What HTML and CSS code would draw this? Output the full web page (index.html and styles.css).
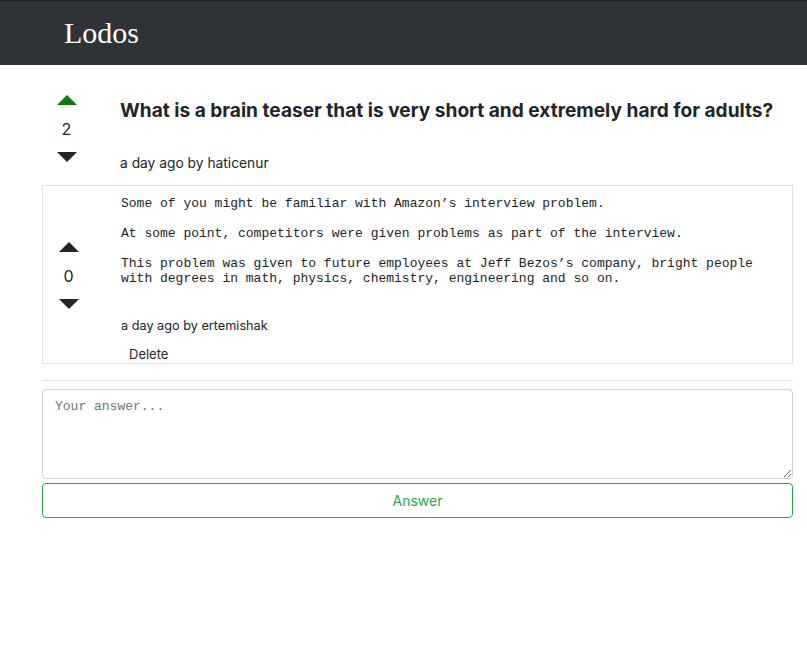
FILE: index.html
```html
<!DOCTYPE html>
<html>
<head>
<meta charset="utf-8">
<link rel="stylesheet" href="styles.css">
</head>
<body>
<header class="navbar"><span class="brand">Lodos</span></header>
<main class="container">
  <section class="question">
    <div class="vote">
      <span class="arrow up green"></span>
      <span class="count">2</span>
      <span class="arrow down"></span>
    </div>
    <div class="body">
      <h1 class="title">What is a brain teaser that is very short and extremely hard for adults?</h1>
      <div class="meta">a day ago by haticenur</div>
    </div>
  </section>
  <section class="answer">
    <div class="vote">
      <span class="arrow up"></span>
      <span class="count">0</span>
      <span class="arrow down"></span>
    </div>
    <div class="body">
      <div class="text">
        <p>Some of you might be familiar with Amazon’s interview problem.</p>
        <p>At some point, competitors were given problems as part of the interview.</p>
        <p>This problem was given to future employees at Jeff Bezos’s company, bright people<br>with degrees in math, physics, chemistry, engineering and so on.</p>
      </div>
      <div class="meta">a day ago by ertemishak</div>
      <button class="delete">Delete</button>
    </div>
  </section>
  <hr class="divider">
  <form class="answer-form">
    <textarea class="input" placeholder="Your answer..."></textarea>
    <button type="button" class="submit">Answer</button>
  </form>
</main>
</body>
</html>
```
FILE: styles.css
```css
* { box-sizing: border-box; }
body {
  margin: 0;
  font-family: Inter, "Noto Sans", sans-serif;
  color: #212529;
  background: #fff;
}
.navbar {
  height: 65px;
  background: #2f3337;
  border-top: 1px solid #1c1f22;
  display: flex;
  align-items: center;
  padding-left: 64px;
}
.brand {
  font-family: "Liberation Serif", serif;
  font-size: 30px;
  color: #fff;
}
.container {
  padding: 0 14px 0 42px;
}
.question {
  display: flex;
  padding-top: 30px;
}
.vote {
  width: 49px;
  display: flex;
  flex-direction: column;
  align-items: center;
  flex-shrink: 0;
}
.answer .vote { width: 51px; align-self: center; padding-top: 1px; }
.arrow {
  width: 0;
  height: 0;
  border-left: 10px solid transparent;
  border-right: 10px solid transparent;
}
.arrow.up { border-bottom: 10px solid #212529; }
.arrow.up.green { border-bottom-color: #0b7a0b; }
.arrow.down { border-top: 10px solid #212529; }
.count {
  font-size: 16px;
  line-height: 24px;
  margin: 12px 0 11px;
}
.question .body { margin-left: 29px; }
.answer .body { margin-left: 27px; flex: 1; }
.title {
  font-size: 19.1px;
  font-weight: 700;
  line-height: 22px;
  margin: 4px 0 0;
  color: #212529;
}
.meta {
  font-size: 13.8px;
  line-height: 20px;
  color: #212529;
}
.question .meta { margin-top: 32px; }
.answer {
  margin-top: 12px;
  border: 1px solid #dee2e6;
  display: flex;
}
.text {
  font-family: "Liberation Mono", monospace;
  font-size: 13px;
  line-height: 15px;
  padding-top: 10px;
  color: #212529;
}
.text p { margin: 0 0 15px; }
.answer .meta { margin-top: 30px; font-size: 12.7px; }
.delete {
  display: block;
  font-family: Inter, sans-serif;
  font-size: 13px;
  line-height: 18px;
  height: 18px;
  border: 0;
  background: none;
  padding: 0 8px;
  margin-top: 9px;
  color: #212529;
}
.divider {
  border: 0;
  border-top: 1px solid #e3e3e3;
  margin: 16px 0 8px;
}
.answer-form {
  display: flex;
  flex-direction: column;
  gap: 4px;
}
.input {
  width: 100%;
  height: 90px;
  border: 1px solid #ced4da;
  border-radius: 4px;
  padding: 8px 12px;
  font-family: "Liberation Mono", monospace;
  font-size: 13px;
  line-height: 17px;
  color: #495057;
  resize: vertical;
}
.input::placeholder { color: #6c757d; }
.submit {
  height: 35px;
  border: 1px solid #28a745;
  border-radius: 4px;
  background: #fff;
  color: #28a745;
  font-family: Inter, sans-serif;
  font-size: 14px;
}
```
